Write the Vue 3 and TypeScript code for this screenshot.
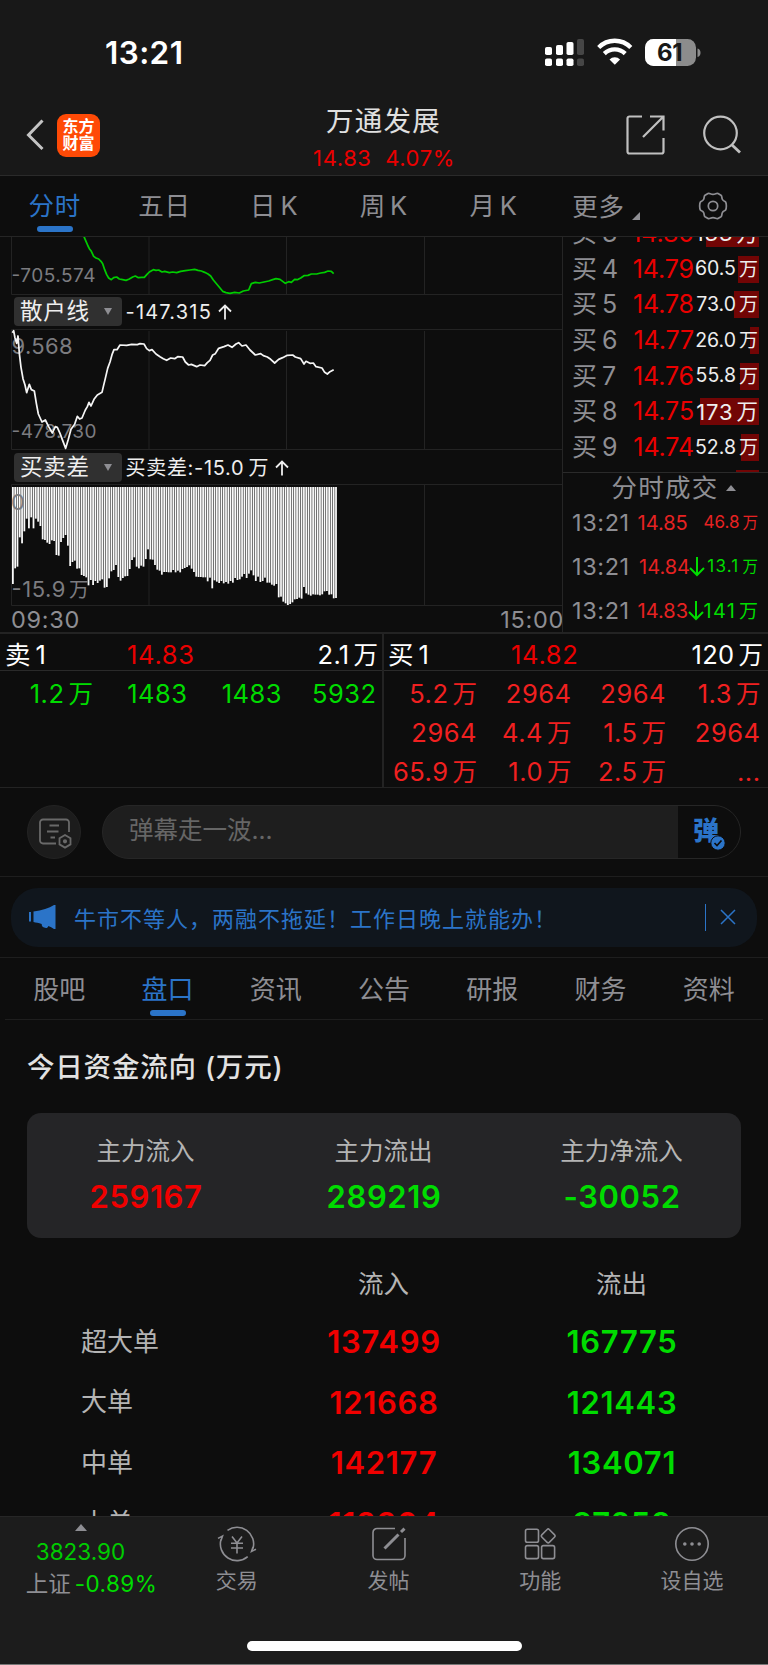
<script setup lang="ts">
interface BookRow { level: number; price: string; volume: string; bar: number; large?: boolean }
interface Trade { time: string; price: string; volume: string; down: boolean; large?: boolean }

const periods = ['分时', '五日', '日K', '周K', '月K']

const book: BookRow[] = [
  { level: 3, price: '14.80', volume: '133', bar: 53, large: true },
  { level: 4, price: '14.79', volume: '60.5', bar: 21 },
  { level: 5, price: '14.78', volume: '73.0', bar: 25 },
  { level: 6, price: '14.77', volume: '26.0', bar: 9 },
  { level: 7, price: '14.76', volume: '55.8', bar: 19 },
  { level: 8, price: '14.75', volume: '173', bar: 59, large: true },
  { level: 9, price: '14.74', volume: '52.8', bar: 18 },
  { level: 10, price: '14.73', volume: '68.2', bar: 23 },
]

const trades: Trade[] = [
  { time: '13:21', price: '14.85', volume: '46.8', down: false },
  { time: '13:21', price: '14.84', volume: '13.1', down: true },
  { time: '13:21', price: '14.83', volume: '141', down: true, large: true },
]

const quotes = [
  { side: 'sell', label: '卖', price: '14.83', volume: '2.1', orders: ['1.2万', '1483', '1483', '5932'] },
  {
    side: 'buy', label: '买', price: '14.82', volume: '120',
    orders: ['5.2万', '2964', '2964', '1.3万', '2964', '4.4万', '1.5万', '2964', '65.9万', '1.0万', '2.5万', '...'],
  },
]

const sections = ['股吧', '盘口', '资讯', '公告', '研报', '财务', '资料']

const summary = [
  { label: '主力流入', value: '259167', tone: 'up' },
  { label: '主力流出', value: '289219', tone: 'down' },
  { label: '主力净流入', value: '-30052', tone: 'down' },
]

const flows = [
  { label: '超大单', inflow: '137499', outflow: '167775' },
  { label: '大单', inflow: '121668', outflow: '121443' },
  { label: '中单', inflow: '142177', outflow: '134071' },
  { label: '小单', inflow: '118304', outflow: '97258' },
]

// Plot samples are stored at three units per CSS pixel.
const mainLine = '252,20 258,34 264,48 268,56 274,64 281,79 288,84 296,87 303,94 308,101 314,119 320,134 326,144 334,149 341,143 350,141 358,147 368,149 378,151 388,147 398,141 406,138 415,143 425,142 433,142 441,133 448,126 460,119 468,121 476,120 486,126 494,124 508,128 518,126 530,128 542,124 556,122 570,120 584,118 594,121 604,123 614,127 624,132 632,138 640,150 650,162 660,174 668,184 678,188 690,190 704,187 718,189 730,183 746,180 754,161 766,157 778,159 792,156 806,153 818,149 828,146 840,148 848,154 856,160 866,155 874,157 884,148 892,149 902,144 912,137 924,136 934,132 950,132 962,129 974,127 984,123 994,124 1001,131'
const retailLine = '37,308 41,302 45,324 50,340 54,318 58,370 63,412 69,446 75,465 80,488 88,463 94,479 103,483 109,520 115,552 126,576 136,570 146,590 157,609 166,590 172,592 180,610 187,629 197,655 205,628 213,598 224,583 232,559 239,567 246,564 256,540 262,530 267,517 273,528 282,508 292,495 306,487 310,470 316,445 323,415 330,396 336,374 342,359 351,359 360,345 380,346 395,343 412,344 420,341 432,342 440,356 448,362 456,359 468,372 480,380 490,386 500,391 512,384 524,386 533,380 548,381 556,396 566,405 574,403 590,410 600,405 614,407 622,398 630,391 638,375 646,371 656,355 672,350 684,345 696,352 708,342 716,338 726,348 738,345 750,360 766,375 782,371 790,377 802,381 812,388 824,399 836,388 848,383 862,376 878,375 886,381 902,386 912,402 918,394 930,400 940,399 948,410 966,414 974,427 982,432 990,425 1001,419'

const bottoms: [number, number][] = [
  [38,372],[45,325],[52,320],[60,232],[68,250],[74,214],[80,176],[87,205],[95,172],[101,205],[108,176],[114,185],[121,198],[128,238],[136,240],[142,248],[150,252],[157,241],[164,243],[170,285],[178,287],[184,246],[191,234],[197,225],[204,257],[211,318],[218,306],[225,302],[232,326],[239,325],[246,345],[253,348],[260,352],[267,376],[273,360],[280,375],[287,363],[294,369],[300,362],[307,358],[315,383],[321,381],[328,355],[335,334],[341,330],[348,315],[355,351],[362,362],[369,354],[376,349],[383,348],[390,327],[397,300],[404,292],[410,320],[417,325],[424,317],[431,320],[438,297],[445,268],[452,298],[459,299],[466,315],[472,329],[480,332],[486,344],[493,336],[507,337],[520,330],[527,337],[534,332],[541,337],[548,327],[555,324],[561,321],[569,316],[576,326],[583,336],[590,350],[600,351],[610,352],[617,352],[624,364],[630,353],[637,385],[644,361],[651,365],[658,369],[664,363],[671,370],[678,366],[685,371],[692,363],[699,368],[706,354],[713,360],[720,358],[727,350],[733,342],[740,354],[747,341],[754,331],[761,346],[768,363],[775,350],[782,366],[789,363],[796,353],[803,368],[810,368],[817,374],[824,377],[831,372],[838,412],[845,410],[852,425],[859,430],[866,435],[873,432],[880,427],[887,418],[894,417],[901,413],[907,416],[912,381],[919,400],[926,404],[933,407],[940,403],[950,404],[960,406],[970,403],[974,394],[981,393],[988,404],[995,403],[1002,415],[1009,414],
]

const bars = Array.from({ length: 142 }, (_, i) => {
  const x = 36 + i * 6.875
  const c = x + 2.5
  const near = bottoms.reduce((a, b) => (Math.abs(b[0] - c) < Math.abs(a[0] - c) ? b : a))
  return { x, h: near[1] - 81 }
})
</script>

<template>
  <div class="page">
    <header class="top">
      <div class="status">
        <span class="clock">13:21</span>
        <svg class="signals" width="160" height="30" viewBox="0 0 160 30">
          <g fill="#fff">
            <rect x="1" y="9" width="7" height="8" rx="1.8" /><rect x="12" y="7" width="7" height="10" rx="1.8" /><rect x="22.500" y="4" width="7" height="13" rx="1.8" />
            <rect x="1" y="20.500" width="7" height="7.500" rx="1.8" /><rect x="12" y="20.500" width="7" height="7.500" rx="1.8" /><rect x="22.500" y="20.500" width="7" height="7.500" rx="1.8" />
          </g>
          <g fill="#464646"><rect x="33" y="1" width="7" height="16" rx="1.8" /><rect x="33" y="20.500" width="7" height="7.500" rx="1.8" /></g>
          <g fill="none" stroke="#fff" stroke-width="4.300">
            <path d="M54.700 9.500a22.500 22.500 0 0 1 32.100 0" />
            <path d="M60.300 15.600a15 15 0 0 1 20.900 0" />
          </g>
          <path d="M70.800 26.800 65.500 21.500a7.600 7.600 0 0 1 10.600 0Z" fill="#fff" />
          <rect x="101" y="1" width="51" height="27" rx="8.500" fill="#8c8c8c" />
          <path d="M109.500 1H132v27h-22.500a8.500 8.500 0 0 1-8.500-8.500v-10a8.500 8.500 0 0 1 8.500-8.500Z" fill="#fff" />
          <path d="M153.500 10.500c4 1 4 7.500 0 8.500Z" fill="#8c8c8c" />
          <text x="125.700" y="23" text-anchor="middle" class="charge">61</text>
        </svg>
      </div>
      <div class="nav">
        <div class="nav-left">
          <svg width="20" height="34" viewBox="0 0 20 34"><path d="M17.500 2.500 3.500 17l14 14" fill="none" stroke="#c4c4c4" stroke-width="3" /></svg>
          <div class="logo"><span>东方</span><span>财富</span></div>
        </div>
        <div class="stock"><b>万通发展</b><span>14.83&nbsp; 4.07%</span></div>
        <div class="nav-right">
          <svg width="42" height="42" viewBox="0 0 42 42" fill="none" stroke="#c0c0c0" stroke-width="2.200"><path d="M17 2.500H4.500a2 2 0 0 0-2 2v33a2 2 0 0 0 2 2H36.500a2 2 0 0 0 2-2V24M25 2.500h13.500v14M38.500 2.500 18 23" /></svg>
          <svg width="42" height="42" viewBox="0 0 42 42" fill="none" stroke="#c0c0c0" stroke-width="2.200"><circle cx="19.500" cy="19" r="16.300" /><path d="m30.500 30.500 8.500 8" stroke-width="2.800" /></svg>
        </div>
      </div>
    </header>

    <nav class="periods">
      <div v-for="(p, i) in periods" :key="p" class="period" :class="{ on: i === 0 }">
        {{ p[0] }}<span :class="{ latin: p[1] === 'K' }">{{ p[1] }}</span>
      </div>
      <div class="period more">更多<svg width="8" height="8" viewBox="0 0 8 8"><path d="M8 0v8H0Z" fill="#8e8e93" /></svg></div>
      <svg class="gear" width="32" height="32" viewBox="0 0 32 32" fill="none" stroke="#8e8e93" stroke-width="1.700">
        <path d="M11 3.500c1.500-.8 2.500.8 5 .8s3.500-1.600 5-.8l3 1.800c1.200.8.500 2 1.300 4s2.700 1.700 3.300 2.700c1 1.600 1 6.400 0 8-.6 1-2.500.7-3.300 2.700s-.1 3.200-1.300 4l-3 1.800c-1.500.8-2.500-.8-5-.8s-3.500 1.600-5 .8l-3-1.800c-1.200-.8-.5-2-1.300-4S4 21 3.400 20c-1-1.600-1-6.400 0-8 .6-1 2.500-.7 3.300-2.700s.1-3.200 1.300-4Z" /><circle cx="16" cy="16" r="4.700" />
      </svg>
    </nav>

    <main class="market">
      <section class="charts">
        <svg class="plot" width="562" height="58" viewBox="0 0 562 58">
          <path class="grid" d="M11.500 0V57.500H562M149 0V57M286.500 0V57M424.500 0V57" />
          <text x="11.500" y="45" class="axis" textLength="84">-705.574</text>
          <g transform="translate(0 -7) scale(.33333)"><polyline :points="mainLine" class="line green" /></g>
        </svg>
        <div class="control first">
          <span class="chip">散户线<i></i></span><span class="reading">-147.315</span>
          <svg width="14" height="16" viewBox="0 0 14 16"><path d="M7 15.500V1.500M1 7.500l6-6 6 6" fill="none" stroke="#eee" stroke-width="1.800" /></svg>
        </div>
        <svg class="plot" width="562" height="124" viewBox="0 0 562 124">
          <path class="grid" d="M11.500 2.500H562M11.500 2.500V122.500H562M149 4V122M286.500 4V122M424.500 4V122" />
          <text x="11.500" y="27" class="axis big" textLength="61">9.568</text>
          <text x="11.500" y="111" class="axis" textLength="85">-478.730</text>
          <g transform="translate(0 -97) scale(.33333)"><polyline :points="retailLine" class="line" /></g>
        </svg>
        <div class="control second">
          <span class="chip">买卖差<i></i></span><span class="reading wide">买卖差:-15.0<em>万</em></span>
          <svg width="14" height="16" viewBox="0 0 14 16"><path d="M7 15.500V1.500M1 7.500l6-6 6 6" fill="none" stroke="#eee" stroke-width="1.800" /></svg>
        </div>
        <svg class="plot" width="562" height="123" viewBox="0 0 562 123">
          <path class="grid" d="M11.500 .500H562M11.500 .500V121.500H562M149 1V121M286.500 1V121M424.500 1V121" />
          <g transform="translate(0 -24) scale(.33333)" fill="#fafafa">
            <rect v-for="(b, i) in bars" :key="i" :x="b.x" y="81" width="5.300" :height="b.h" />
          </g>
          <text x="11" y="25.500" class="axis big">0</text>
          <text x="11.500" y="112.500" class="axis big"><tspan textLength="54">-15.9</tspan><tspan x="69" font-size="20">万</tspan></text>
        </svg>
        <div class="hours"><span>09:30</span><span>15:00</span></div>
      </section>

      <aside class="side">
        <div class="book">
          <div v-for="r in book" :key="r.level" class="book-row">
            <span class="level">买<b>{{ r.level }}</b></span>
            <span class="price">{{ r.price }}</span>
            <span class="volume" :class="{ large: r.large }">
              <i :style="{ width: r.bar + 'px' }"></i><b>{{ r.volume }}</b><em>万</em>
            </span>
          </div>
        </div>
        <div class="trade-title">分时成交<svg width="10" height="6" viewBox="0 0 10 6"><path d="M5 0l5 6H0Z" fill="#8e8e93" /></svg></div>
        <div v-for="(t, i) in trades" :key="i" class="trade">
          <span class="time">{{ t.time }}</span><span class="deal">{{ t.price }}</span>
          <svg width="16" height="20" viewBox="0 0 16 20"><path v-if="t.down" d="M8 0v18M1 11l7 7 7-7" fill="none" stroke="#00dc00" stroke-width="2" /></svg>
          <span class="amount" :class="{ fall: t.down, large: t.large }">{{ t.volume }}<em>万</em></span>
        </div>
      </aside>
    </main>

    <section class="level-one">
      <div v-for="q in quotes" :key="q.side" class="quote" :class="q.side">
        <div class="quote-head"><span class="tag">{{ q.label }}<b>1</b></span><span class="best">{{ q.price }}</span><span class="size">{{ q.volume }}<em>万</em></span></div>
        <div class="orders">
          <span v-for="(o, i) in q.orders" :key="i">{{ o.replace('万', '') }}<em v-if="o.endsWith('万')">万</em></span>
        </div>
      </div>
    </section>

    <section class="barrage">
      <div class="round">
        <svg width="34" height="32" viewBox="0 0 34 32" fill="none" stroke="#696969" stroke-width="1.800">
          <path d="M18 25.500H5a3 3 0 0 1-3-3v-18a3 3 0 0 1 3-3h23a3 3 0 0 1 3 3V14M11.500 7.500H21M9 13.500h11.500M12.500 19.500H17" />
          <path d="m27 17 5.500 3.200v6.200L27 29.600l-5.500-3.200v-6.200Z" /><circle cx="27" cy="23.300" r="1.200" fill="#696969" />
        </svg>
      </div>
      <div class="input">
        <span class="placeholder">弹幕走一波...</span>
        <div class="toggle">弹<svg width="16" height="16" viewBox="0 0 16 16"><circle cx="8" cy="8" r="7.200" fill="#2b74c8" stroke="#0d0d0d" /><path d="m4.500 8 2.500 2.500 4.500-5" fill="none" stroke="#0d0d0d" stroke-width="1.700" /></svg></div>
      </div>
    </section>

    <section class="notice-area">
      <div class="notice">
        <svg width="27" height="24" viewBox="0 0 27 24" fill="#2b74c8"><path d="M0 7h2v9.500H0ZM4.500 6.500C13 5.500 20 3 25 0h1.500v24H25c-2-1.300-3.700-2.300-5.600-3.100-.8 2-2 2.500-4.300 1.600-1.700-.6-2.500-1.400-2.400-3.500C9.500 18 7 17.500 4.500 17Z" /></svg>
        <span class="notice-text">牛市不等人，两融不拖延！工作日晚上就能办！</span>
        <i class="bar"></i>
        <svg width="16" height="16" viewBox="0 0 16 16"><path d="m1 1 14 14M15 1 1 15" stroke="#2b74c8" stroke-width="1.500" /></svg>
      </div>
    </section>

    <nav class="sections">
      <span v-for="(s, i) in sections" :key="s" :class="{ on: i === 1 }">{{ s }}</span>
    </nav>

    <section class="funds">
      <h2>今日资金流向 (万元)</h2>
      <div class="card">
        <div v-for="s in summary" :key="s.label"><span>{{ s.label }}</span><b :class="s.tone">{{ s.value }}</b></div>
      </div>
      <div class="flow head"><span></span><span>流入</span><span>流出</span></div>
      <div v-for="f in flows" :key="f.label" class="flow">
        <span class="kind">{{ f.label }}</span><b class="up">{{ f.inflow }}</b><b class="down">{{ f.outflow }}</b>
      </div>
    </section>

    <footer class="dock">
      <div class="dock-row">
        <div class="index">
          <svg width="12" height="7" viewBox="0 0 12 7"><path d="M6 0l6 7H0Z" fill="#8e8e93" /></svg>
          <span class="points">3823.90</span>
          <span class="change">上证<b>-0.89%</b></span>
        </div>
        <div class="item">
          <svg width="40" height="36" viewBox="0 0 40 36" fill="none" stroke="#8e8e93" stroke-width="1.600">
            <path d="M10.500 4.300A16.600 16.600 0 0 1 36 22.500M30.700 30.700A16.600 16.600 0 0 1 4 13.500M1 12.400l4.500-2.300-1.500 4.500M39 23.200l-4.500 2.300 1.500-4.500" />
            <path d="m15 10.500 5 6.500 5-6.500M20 17v10.500M14 17.300h12M14 22h12" />
          </svg>交易
        </div>
        <div class="item">
          <svg width="40" height="36" viewBox="0 0 40 36" fill="none" stroke="#8e8e93" stroke-width="1.600">
            <path d="M26 2.500H8a4 4 0 0 0-4 4v23a4 4 0 0 0 4 4h24a4 4 0 0 0 4-4V12" /><path d="M15.500 22.500 29.500 8.500M32 6l3.500-3.300" stroke-width="3" />
          </svg>发帖
        </div>
        <div class="item">
          <svg width="40" height="36" viewBox="0 0 40 36" fill="none" stroke="#8e8e93" stroke-width="1.600">
            <rect x="5.500" y="3.300" width="13" height="13" rx="1.800" /><rect x="5.500" y="19.600" width="13" height="13" rx="1.800" /><rect x="21.600" y="19.600" width="13" height="13" rx="1.800" /><rect x="22.900" y="4.600" width="10.600" height="10.600" rx="1.500" transform="rotate(45 28.200 9.900)" />
          </svg>功能
        </div>
        <div class="item">
          <svg width="40" height="36" viewBox="0 0 40 36" fill="none" stroke="#8e8e93" stroke-width="1.600">
            <circle cx="20" cy="18" r="16.200" /><g fill="#8e8e93" stroke="none"><circle cx="12.800" cy="18" r="1.800" /><circle cx="20" cy="18" r="1.800" /><circle cx="27.200" cy="18" r="1.800" /></g>
          </svg>设自选
        </div>
      </div>
      <div class="home"></div>
    </footer>
  </div>
</template>

<style>
body { background: #0d0d0d; }
</style>

<style scoped>
* { box-sizing: border-box; }
.page { width: 768px; height: 1665px; overflow: hidden; display: flex; flex-direction: column; background: #0d0d0d; color: #8e8e93; font-family: Inter, "Noto Sans CJK SC", sans-serif; font-size: 25px; line-height: 1; }
svg { display: block; flex: none; }
b, em, i { font-weight: inherit; font-style: normal; }
.up { color: #f00000; }
.down { color: #00dc00; }

.top { height: 176px; flex: none; background: #181818; border-bottom: 1px solid #2a2a2a; }
.status { height: 97px; padding: 8px 65px 0 105px; display: flex; align-items: center; justify-content: space-between; }
.clock { color: #fff; font-size: 31.500px; font-weight: 600; letter-spacing: 0.400px; }
.signals { margin: 0 -0.500px 0 0; }
.charge { font-size: 24px; font-weight: 700; fill: #181818; letter-spacing: -0.300px; }
.nav { height: 76px; display: grid; grid-template-columns: 250px 1fr 250px; grid-template-rows: 76px; align-items: center; }
.nav-left { display: flex; align-items: center; gap: 12px; padding-left: 25px; }
.logo { width: 43px; height: 43px; border-radius: 9px; background: #ff4a06; color: #fff; font-weight: 700; font-size: 16px; line-height: 17.500px; padding-top: 4px; text-align: center; }
.logo span { display: block; }
.stock { text-align: center; padding-top: 9px; }
.stock b { display: block; font-size: 27.500px; letter-spacing: 1.200px; color: #e0e0e0; line-height: 37px; margin-right: 1px; }
.stock span { display: block; color: #ea0000; font-size: 22px; line-height: 36px; letter-spacing: 0.600px; white-space: pre; }
.nav-right { display: flex; gap: 34px; padding: 0 0 0 107px; }

.periods { height: 61px; flex: none; display: flex; align-items: center; border-bottom: 1px solid #252525; }
.period { position: relative; width: 109.700px; height: 60px; line-height: 59px; text-align: center; font-size: 25.500px; letter-spacing: 0.800px; white-space: nowrap; }
.period.on { color: #2b74c8; }
.period.on::after { content: ""; position: absolute; left: 37px; bottom: 4px; width: 36px; height: 6px; border-radius: 3px; background: #2b74c8; }
.latin { margin-left: 4px; }
.more { width: 115px; display: flex; align-items: center; justify-content: center; gap: 7px; }
.more svg { margin-top: 20px; }
.gear { margin-left: 34px; margin-top: -1px; }

.market { height: 395px; flex: none; display: flex; }
.charts { width: 562px; }
.grid { fill: none; stroke: #232323; }
.axis { fill: #7c7c80; font-size: 19px; }
.axis.big { font-size: 22px; }
.line { fill: none; stroke: #f5f5f5; stroke-width: 5.200; stroke-linejoin: round; }
.green { stroke: #00cc00; }
.control { display: flex; align-items: center; padding-left: 14px; color: #eee; }
.first { height: 32px; padding-top: 1px; }
.second { height: 33px; }
.chip { width: 107.500px; height: 29px; border-radius: 4px; background: #303030; display: flex; align-items: center; justify-content: space-between; padding: 0 10px 0 6px; font-size: 22.500px; letter-spacing: 0.700px; }
.chip i { border: 4px solid transparent; border-top: 7px solid #8e8e93; border-bottom: 0; }
.reading { margin: 0 6px 0 4px; font-size: 20px; letter-spacing: 1.200px; }
.reading.wide { letter-spacing: 0.700px; }
.reading em { margin-left: 4px; }
.hours { height: 25px; display: flex; justify-content: space-between; align-items: center; margin-right: -2px; padding: 0 0 0 11px; font-size: 23.500px; letter-spacing: 0.700px; }

.side { width: 206px; border-left: 1px solid #252525; }
.book { height: 236px; overflow: hidden; border-bottom: 1px solid #2a2a2a; }
.book-row { height: 35.700px; display: flex; align-items: center; padding: 0 9px 0 9px; }
.book-row:first-child { margin-top: -21.500px; }
.level { width: 50px; font-size: 25px; white-space: nowrap; flex: none; }
.level b { margin-left: 5px; }
.price { width: 72px; text-align: right; color: #ea0000; font-size: 25px; letter-spacing: -0.100px; flex: none; }
.volume { position: relative; height: 27px; flex: 1; display: flex; align-items: center; justify-content: flex-end; color: #eee; font-size: 19.500px; white-space: nowrap; }
.volume i { position: absolute; right: 0; top: 0; height: 27px; background: #720505; }
.volume b, .volume em { position: relative; }
.volume em { font-size: 19px; margin-left: 3px; margin-right: 1px; }
.volume.large { font-size: 22px; letter-spacing: 0.900px; }
.volume.large em { font-size: 21.500px; letter-spacing: 0; }
.trade-title { height: 29px; display: flex; align-items: center; justify-content: center; gap: 8px; padding-left: 17px; font-size: 25.500px; letter-spacing: 1.200px; }
.trade { height: 43.900px; display: flex; align-items: center; padding: 0 10px 2px 9px; }
.time { width: 67px; font-size: 23.500px; letter-spacing: 0.600px; }
.deal { width: 50px; font-size: 20px; color: #e62222; }
.amount { flex: 1; text-align: right; color: #e62222; font-size: 17px; white-space: nowrap; }
.amount em { margin-left: 3px; font-size: 15.500px; letter-spacing: 0; }
.amount.fall { color: #00dc00; letter-spacing: 1.200px; }
.amount.large { font-size: 20px; }
.amount.large em { font-size: 19px; }

.level-one { height: 156px; flex: none; display: flex; border-bottom: 1px solid #232323; }
.quote { width: 384px; }
.sell { border-right: 2px solid #232323; }
.quote-head { height: 39px; display: grid; grid-template-columns: 120px 1fr 1fr; align-items: center; border-top: 2px solid #232323; border-bottom: 1px solid #2a2a2a; padding: 5px 4px 0 5px; color: #fff; font-size: 25.500px; }
.buy .quote-head { padding: 5px 5px 0 4px; }
.tag b { margin-left: 5px; }
.quote em { margin-left: 4px; font-size: 24.500px; letter-spacing: 0; }
.best { color: #ea0000; padding-left: 2px; letter-spacing: 0.700px; }
.buy .best { padding-left: 3px; }
.size { text-align: right; letter-spacing: 0.300px; }
.orders { display: grid; grid-template-columns: 93px repeat(3, 94.500px); grid-auto-rows: 39px; padding-top: 3px; text-align: right; font-size: 25.500px; letter-spacing: 0.500px; line-height: 39px; color: #00dc00; }
.buy .orders { color: #f02020; }

.barrage { height: 89px; flex: none; display: flex; align-items: center; gap: 21px; padding: 0 27px 0; border-bottom: 1px solid #1e1e1e; }
.round { width: 54px; height: 54px; border-radius: 50%; background: #1c1c1c; border: 1px solid #232323; padding: 12px 0 0 10px; }
.input { flex: 1; height: 54px; border-radius: 27px; border: 1px solid #262626; background: #1e1e1e; overflow: hidden; display: flex; justify-content: space-between; }
.placeholder { padding-left: 26px; line-height: 48px; color: #666; font-size: 24.500px; }
.toggle { position: relative; width: 62px; background: #0d0d0d; color: #2b74c8; font-size: 26px; font-weight: 900; line-height: 50px; padding-left: 15px; }
.toggle svg { position: absolute; left: 32px; top: 29px; }

.notice-area { height: 81px; flex: none; padding: 11px 11px 10px; border-bottom: 1px solid #1e1e1e; }
.notice { height: 59px; border-radius: 27px; background: #10161d; color: #2b74c8; display: flex; align-items: center; padding: 0 21px 1px 18px; }
.notice-text { flex: 1; margin-left: 18px; font-size: 22px; letter-spacing: 1px; padding-top: 3px; }
.bar { width: 1px; height: 27px; background: #2b74c8; margin-right: 14px; }

.sections { height: 62px; flex: none; margin: 0 5px; display: flex; border-bottom: 1px solid #1e1e1e; }
.sections span { position: relative; flex: 1; text-align: center; line-height: 63px; font-size: 26px; }
.sections .on { color: #2b74c8; }
.sections .on::after { content: ""; position: absolute; left: 50%; bottom: 3px; width: 36px; height: 6px; margin-left: -17px; border-radius: 3px; background: #2b74c8; }

.funds { height: 496px; flex: none; overflow: hidden; padding: 0 27px; color: #b4b4b4; }
h2 { margin: 0; height: 93px; line-height: 95px; font-size: 27.500px; font-weight: 500; color: #e2e2e2; letter-spacing: 0.800px; }
.card { height: 125px; border-radius: 14px; background: #252527; display: grid; grid-template-columns: repeat(3, 1fr); text-align: center; padding-top: 15px; }
.card span { display: block; line-height: 46px; font-size: 24.500px; margin-left: -1px; }
.card b { display: block; line-height: 46px; font-size: 31px; font-weight: 600; letter-spacing: 0.600px; }
.flow { height: 60.500px; display: grid; grid-template-columns: repeat(3, 1fr); align-items: center; text-align: center; font-size: 26px; }
.flow.head { height: 54px; margin-top: 19px; margin-bottom: 0.500px; font-size: 25.500px; }
.flow.head span { margin-left: -1px; }
.kind { text-align: left; padding-left: 54px; }
.flow b { font-size: 31px; font-weight: 600; letter-spacing: 0.700px; }

.dock { height: 149px; flex: none; background: #1c1c1c; border-top: 1px solid #262626; border-bottom: 1px solid #777; display: flex; flex-direction: column; justify-content: space-between; align-items: center; }
.dock-row { width: 100%; display: flex; }
.dock-row svg { overflow: visible; }
.index { width: 161px; padding-top: 7px; display: flex; flex-direction: column; align-items: center; }
.points { color: #00cc00; font-size: 22.500px; line-height: 32px; margin-top: 5px; }
.change { font-size: 22.500px; line-height: 32px; margin-left: 22px; white-space: nowrap; }
.change b { color: #00dc00; margin-left: 4px; font-size: 22.500px; letter-spacing: 0.400px; }
.item { width: 151.700px; padding-top: 9px; display: flex; flex-direction: column; align-items: center; gap: 8px; font-size: 21px; line-height: 22px; }
.home { width: 275px; height: 10px; border-radius: 5px; background: #fff; margin-bottom: 13px; }
</style>
